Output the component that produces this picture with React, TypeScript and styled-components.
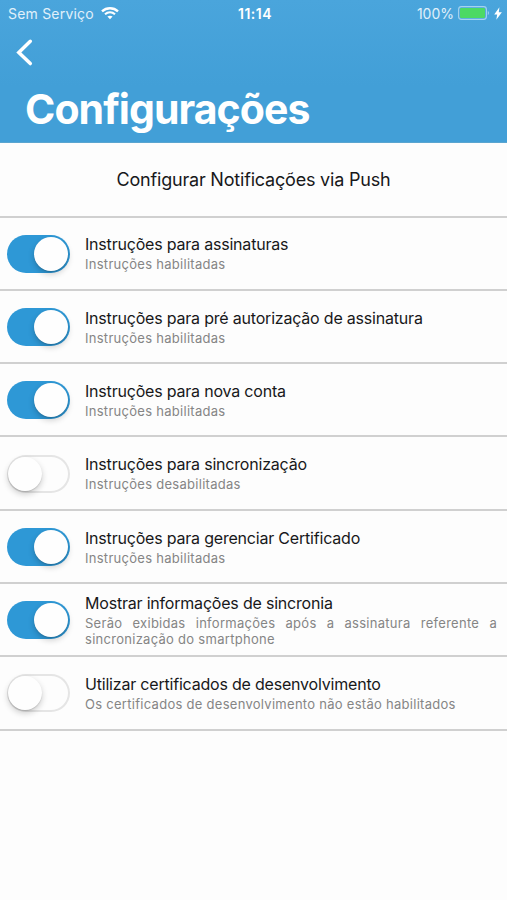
import React from "react";
import styled, { createGlobalStyle } from "styled-components";

const GlobalStyle = createGlobalStyle`
  * { box-sizing: border-box; }
  body { margin: 0; background: #fdfdfd; }
`;

const Screen = styled.main`
  width: 507px;
  height: 900px;
  overflow: hidden;
  background: #fdfdfd;
  font-family: Inter, "Liberation Sans", sans-serif;
  color: #18181a;
`;

const Header = styled.header`
  height: 143px;
  background: linear-gradient(#4aa5dc, #429fd7 60%);
  border-bottom: 1px solid #5aa5d0;
  color: #fff;
`;

const StatusBar = styled.div`
  height: 28px;
  padding: 0 5px 0 8px;
  display: grid;
  grid-template-columns: 1fr auto 1fr;
  align-items: center;
  font-size: 14px;
  line-height: 28px;
`;

const Carrier = styled.div`
  display: flex;
  align-items: center;
  gap: 7px;
  color: #e0f0fa;
  letter-spacing: 0.2px;

  svg { margin-top: -2px; }
`;

const Clock = styled.div`
  font-size: 14px;
  font-weight: 600;
  letter-spacing: 0.5px;
`;

const Power = styled.div`
  display: flex;
  align-items: center;
  justify-content: flex-end;
  gap: 4px;
  color: #e0f0fa;

  svg { margin-top: -2px; }
`;

const BackButton = styled.button`
  display: block;
  margin: 10px 0 0 15px;
  padding: 0;
  width: 20px;
  height: 29px;
  border: 0;
  background: none;
  color: #fff;
`;

const Title = styled.h1`
  margin: 17px 0 0 25px;
  font-size: 41px;
  line-height: 50px;
  font-weight: 700;
  letter-spacing: -0.95px;
  white-space: nowrap;
`;

const SectionTitle = styled.h2`
  margin: 0;
  height: 74.5px;
  padding-top: 24px;
  border-bottom: 2px solid #d0d0d0;
  text-align: center;
  font-size: 18px;
  line-height: 25px;
  font-weight: 400;
  letter-spacing: -0.2px;
`;

const Row = styled.label`
  display: flex;
  align-items: center;
  gap: 15px;
  height: 73.3px;
  padding: 1px 10px 0 7px;
  border-bottom: 2px solid #d0d0d0;
`;

const Track = styled.span<{ $on: boolean }>`
  flex: none;
  display: flex;
  align-items: center;
  justify-content: ${(p) => (p.$on ? "flex-end" : "flex-start")};
  width: 63px;
  height: 38px;
  padding: 0 ${(p) => (p.$on ? "2px" : "1px")};
  border-radius: 19px;
  background: ${(p) => (p.$on ? "#2e98d6" : "#fdfdfd")};
  box-shadow: ${(p) => (p.$on ? "none" : "inset 0 0 0 2px #e5e5e5")};
`;

const Thumb = styled.span`
  width: 34px;
  height: 34px;
  border-radius: 50%;
  background: #fefefe;
  box-shadow: 0 3px 6px rgba(0, 0, 0, 0.2), 0 1px 1px rgba(0, 0, 0, 0.12);
`;

const Copy = styled.span`
  flex: 1;
  min-width: 0;
  display: flex;
  flex-direction: column;
  margin-top: -1.6px;
`;

const Name = styled.span`
  font-size: 16px;
  line-height: 22px;
  letter-spacing: -0.2px;
`;

const Detail = styled.span`
  font-size: 13px;
  line-height: 16px;
  margin-top: 1px;
  letter-spacing: 0.28px;
  color: #858585;
  text-align: justify;
`;

const settings = [
  { name: "Instruções para assinaturas", detail: "Instruções habilitadas", on: true },
  { name: "Instruções para pré autorização de assinatura", detail: "Instruções habilitadas", on: true },
  { name: "Instruções para nova conta", detail: "Instruções habilitadas", on: true },
  { name: "Instruções para sincronização", detail: "Instruções desabilitadas", on: false },
  { name: "Instruções para gerenciar Certificado", detail: "Instruções habilitadas", on: true },
  {
    name: "Mostrar informações de sincronia",
    detail: "Serão exibidas informações após a assinatura referente a sincronização do smartphone",
    on: true,
  },
  {
    name: "Utilizar certificados de desenvolvimento",
    detail: "Os certificados de desenvolvimento não estão habilitados",
    on: false,
  },
];

const WifiIcon = () => (
  <svg width="18" height="13" viewBox="0 0 18 13" fill="none" stroke="#fff">
    <path d="M1 4.4C5.6.2 12.4.2 17 4.4" strokeWidth="2.4" />
    <path d="M4 7.3c2.9-2.6 7.1-2.6 10 0" strokeWidth="2.1" />
    <path d="M6.4 9.6c1.6-1.3 3.6-1.3 5.2 0L9 12.2z" fill="#fff" stroke="none" />
  </svg>
);

const BatteryIcon = () => (
  <svg width="32" height="14" viewBox="0 0 32 14">
    <rect x=".6" y=".6" width="27.8" height="12.8" rx="2.8" fill="none" stroke="#a5d3ef" strokeWidth="1.1" />
    <rect x="2" y="2" width="25" height="10" rx="1.3" fill="#4cd964" />
    <path d="M29.8 5c1.4.3 1.4 3.7 0 4z" fill="#a5d3ef" />
  </svg>
);

const BoltIcon = () => (
  <svg width="8" height="13" viewBox="0 0 8 13">
    <path d="M5.4.3.2 7.4h3L2.3 12.7 7.9 5.3H4.8z" fill="#fff" />
  </svg>
);

const BackIcon = () => (
  <svg width="20" height="29" viewBox="0 0 20 29" fill="none" stroke="currentColor">
    <path d="M15.3 3.3 3.8 14.4l11.5 11.2" strokeWidth="3.5" strokeLinecap="round" strokeLinejoin="miter" />
  </svg>
);

export default function App() {
  return (
    <Screen>
      <GlobalStyle />
      <Header>
        <StatusBar>
          <Carrier>
            <span>Sem Serviço</span>
            <WifiIcon />
          </Carrier>
          <Clock>11:14</Clock>
          <Power>
            <span>100%</span>
            <BatteryIcon />
            <BoltIcon />
          </Power>
        </StatusBar>
        <BackButton aria-label="Voltar">
          <BackIcon />
        </BackButton>
        <Title>Configurações</Title>
      </Header>
      <SectionTitle>Configurar Notificações via Push</SectionTitle>
      {settings.map((s) => (
        <Row key={s.name}>
          <Track $on={s.on}>
            <Thumb />
          </Track>
          <Copy>
            <Name>{s.name}</Name>
            <Detail>{s.detail}</Detail>
          </Copy>
        </Row>
      ))}
    </Screen>
  );
}
